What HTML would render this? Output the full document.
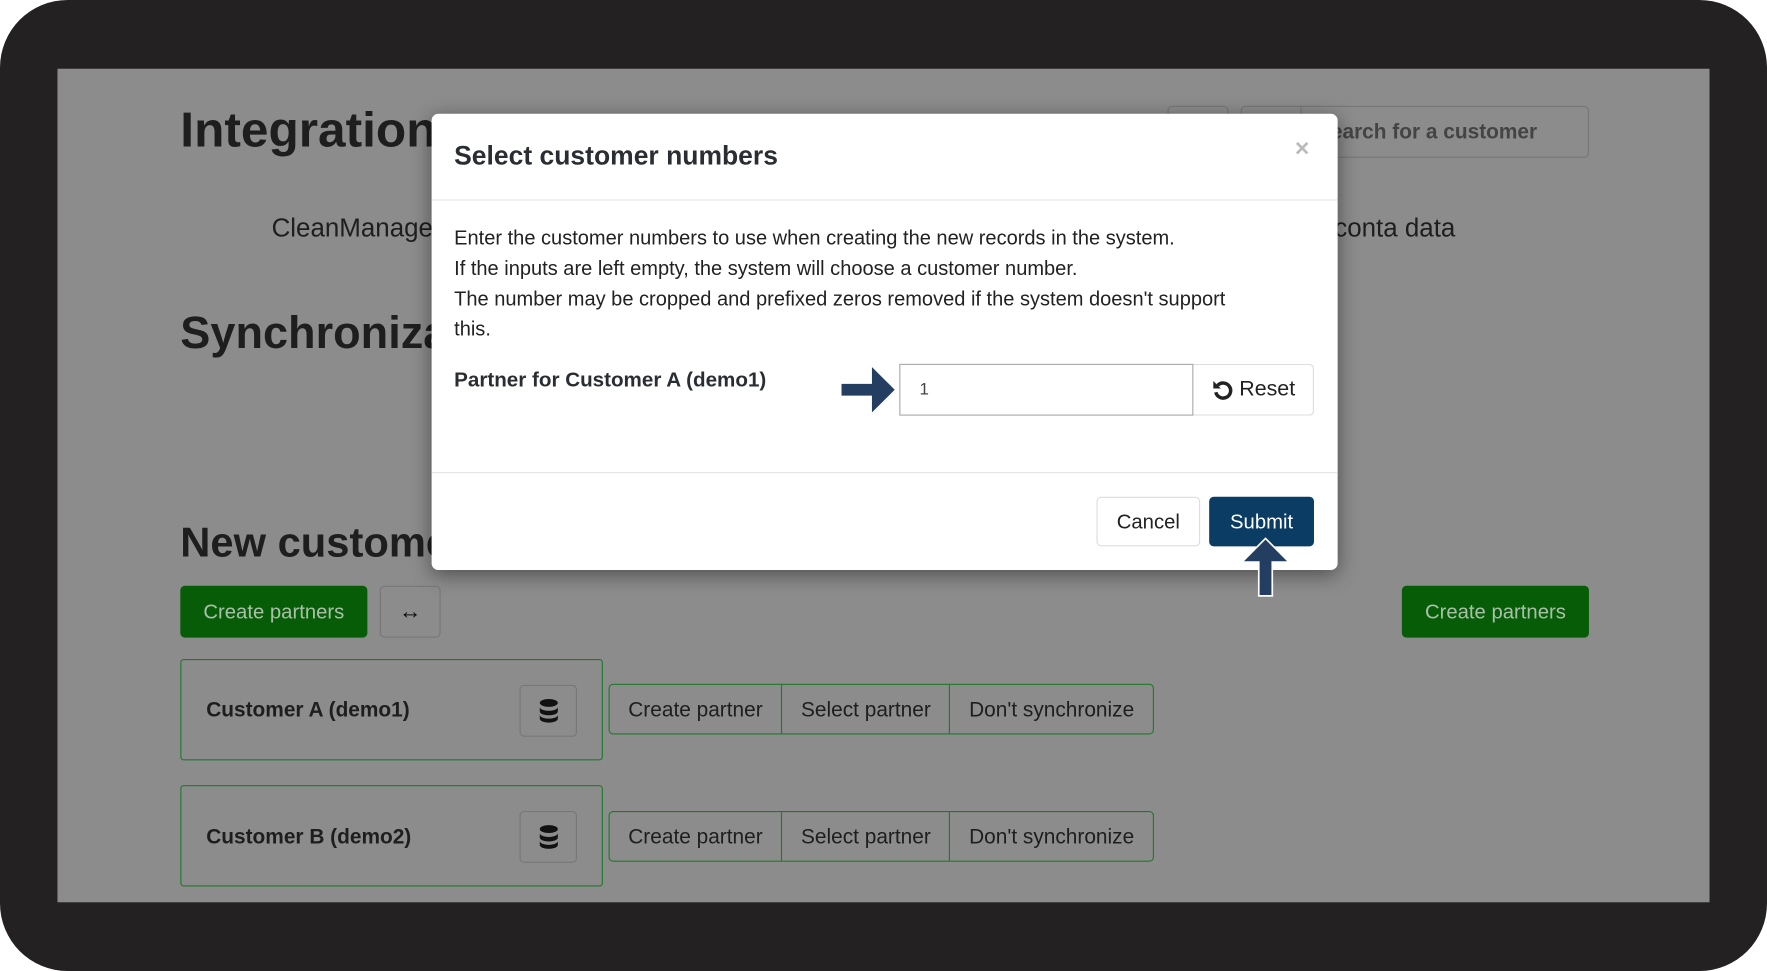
<!DOCTYPE html>
<html><head><meta charset="utf-8"><style>
html,body{margin:0;padding:0;background:#fff;overflow:hidden;}
#s{width:1568px;height:862px;transform:scale(1.12691,1.12645);transform-origin:0 0;position:relative;font-family:"Liberation Sans",Arial,sans-serif;}
.frame{position:absolute;left:0;top:0;width:1568px;height:862px;background:#232122;border-radius:60px;}
.page{position:absolute;left:51px;top:61px;width:1466px;height:740px;background:#8c8c8c;overflow:hidden;}
.a{position:absolute;white-space:nowrap;}
.h1{font-size:44px;font-weight:bold;color:#1e1e1e;}
.h2{font-size:37px;font-weight:bold;color:#1e1e1e;}
.gbtn{position:absolute;background:#075c07;color:#a8c0a8;font-size:18px;border-radius:4px;display:flex;align-items:center;justify-content:center;}
.box{position:absolute;border:1.5px solid #1e7a2a;border-radius:3px;}
.grp{position:absolute;display:flex;border:1.5px solid #1e7a2a;border-radius:4px;height:43px;}
.grp div{display:flex;align-items:center;padding:0 16.5px;font-size:18.5px;color:#1e1e1e;border-right:1.5px solid #1e7a2a;}
.grp div:last-child{border-right:none;}
.db{position:absolute;width:49px;height:44px;border:1px solid #777;border-radius:4px;display:flex;align-items:center;justify-content:center;}
.modal{position:absolute;left:383px;top:101px;width:804px;height:405px;background:#fff;border-radius:6px;box-shadow:0 4px 18px rgba(0,0,0,.45);}
.t{font-size:17.5px;color:#222;}
</style></head><body><div id="s">
<div class="frame"></div>
<div class="page">
 <div class="a h1" style="left:109px;top:30px;">Integration</div>
 <div class="a" style="left:985px;top:33px;width:52px;height:44px;border:1px solid #777;border-radius:4px;"></div>
 <div class="a" style="left:1050px;top:33px;width:307px;height:44px;border:1px solid #777;border-radius:4px;"></div>
 <div class="a" style="left:1103px;top:33px;width:1px;height:46px;background:#777;"></div>
 <div class="a" style="left:1130px;top:45px;font-size:18.5px;color:#444;font-weight:bold;">earch for a customer</div>
 <div class="a" style="left:190px;top:128px;font-size:23px;color:#1e1e1e;">CleanManager</div>
 <div class="a" style="left:1133px;top:128px;font-size:23px;color:#1e1e1e;">conta data</div>
 <div class="a h1" style="left:109px;top:213px;font-size:40px;">Synchronization</div>
 <div class="a h2" style="left:109px;top:400px;">New customers</div>
 <div class="gbtn" style="left:109px;top:459px;width:166px;height:46px;">Create partners</div>
 <div class="a" style="left:286px;top:459px;width:52px;height:44px;border:1px solid #777;border-radius:4px;display:flex;align-items:center;justify-content:center;font-size:20px;color:#111;font-weight:bold;">&#8596;</div>
 <div class="gbtn" style="left:1193px;top:459px;width:166px;height:46px;">Create partners</div>
 <div class="box" style="left:109px;top:524px;width:373px;height:88px;"></div>
 <div class="a" style="left:132px;top:558px;font-size:18.5px;font-weight:bold;color:#1e1e1e;">Customer A (demo1)</div>
 <div class="db" style="left:410px;top:547px;"><svg width="18" height="22" viewBox="0 0 18 22"><ellipse cx="9" cy="4" rx="8" ry="3.5" fill="#111"/><path d="M1 7.5c0 2 3.6 3.5 8 3.5s8-1.5 8-3.5v4c0 2-3.6 3.5-8 3.5s-8-1.5-8-3.5z" fill="#111"/><path d="M1 14.5c0 2 3.6 3.5 8 3.5s8-1.5 8-3.5v3.5c0 2-3.6 3.5-8 3.5s-8-1.5-8-3.5z" fill="#111"/></svg></div>
 <div class="grp" style="left:489px;top:546px;"><div>Create partner</div><div>Select partner</div><div>Don't synchronize</div></div>
 <div class="box" style="left:109px;top:636px;width:373px;height:88px;"></div>
 <div class="a" style="left:132px;top:671px;font-size:18.5px;font-weight:bold;color:#1e1e1e;">Customer B (demo2)</div>
 <div class="db" style="left:410px;top:659px;"><svg width="18" height="22" viewBox="0 0 18 22"><ellipse cx="9" cy="4" rx="8" ry="3.5" fill="#111"/><path d="M1 7.5c0 2 3.6 3.5 8 3.5s8-1.5 8-3.5v4c0 2-3.6 3.5-8 3.5s-8-1.5-8-3.5z" fill="#111"/><path d="M1 14.5c0 2 3.6 3.5 8 3.5s8-1.5 8-3.5v3.5c0 2-3.6 3.5-8 3.5s-8-1.5-8-3.5z" fill="#111"/></svg></div>
 <div class="grp" style="left:489px;top:659px;"><div>Create partner</div><div>Select partner</div><div>Don't synchronize</div></div>
</div>
<div class="modal">
 <div class="a" style="left:20px;top:24px;font-size:23.5px;font-weight:bold;color:#2a2e33;">Select customer numbers</div>
 <div class="a" style="left:766px;top:18px;font-size:22px;color:#bbb;font-weight:bold;">&#215;</div>
 <div class="a" style="left:0;top:76px;width:804px;height:1px;background:#e5e5e5;"></div>
 <div class="a t" style="left:20px;top:97px;line-height:27px;white-space:normal;width:690px;font-size:17.8px;">Enter the customer numbers to use when creating the new records in the system.<br>If the inputs are left empty, the system will choose a customer number.<br>The number may be cropped and prefixed zeros removed if the system doesn't support<br>this.</div>
 <div class="a" style="left:20px;top:225px;font-size:18.3px;font-weight:bold;color:#2a2e33;">Partner for Customer A (demo1)</div>
 <svg class="a" style="left:362px;top:222px;" width="52" height="46" viewBox="0 0 52 46"><path d="M1 17h27V1l22 22-22 22V29H1z" fill="#243e62" stroke="#fff" stroke-width="1.5"/></svg>
 <div class="a" style="left:415px;top:222px;width:261px;height:46px;border:1px solid #aaa;box-sizing:border-box;"></div>
 <div class="a" style="left:433px;top:236px;font-size:15px;color:#444;">1</div>
 <div class="a" style="left:676px;top:222px;width:107px;height:46px;border:1px solid #ddd;border-left:none;border-radius:0 4px 4px 0;box-sizing:border-box;display:flex;align-items:center;justify-content:center;font-size:19px;color:#222;gap:5px;"><svg width="20" height="20" viewBox="0 0 18 18"><path d="M5 5.5A6 6 0 1 1 3.5 11" fill="none" stroke="#222" stroke-width="2.8"/><path d="M1.5 2v6h6z" fill="#222"/></svg>Reset</div>
 <div class="a" style="left:0;top:318px;width:804px;height:1px;background:#e5e5e5;"></div>
 <div class="a" style="left:590px;top:340px;width:92px;height:44px;border:1px solid #ddd;border-radius:4px;box-sizing:border-box;display:flex;align-items:center;justify-content:center;font-size:18px;color:#222;">Cancel</div>
 <div class="a" style="left:690px;top:340px;width:93px;height:44px;background:#0b3c64;border-radius:4px;display:flex;align-items:center;justify-content:center;font-size:18px;color:#fff;">Submit</div>
</div>
<svg class="a" style="left:1099px;top:477px;" width="48" height="53" viewBox="0 0 48 53"><path d="M24 1L45 22H30v30H18V22H3z" fill="#243e62" stroke="#fff" stroke-width="1.5"/></svg>
</div></body></html>
